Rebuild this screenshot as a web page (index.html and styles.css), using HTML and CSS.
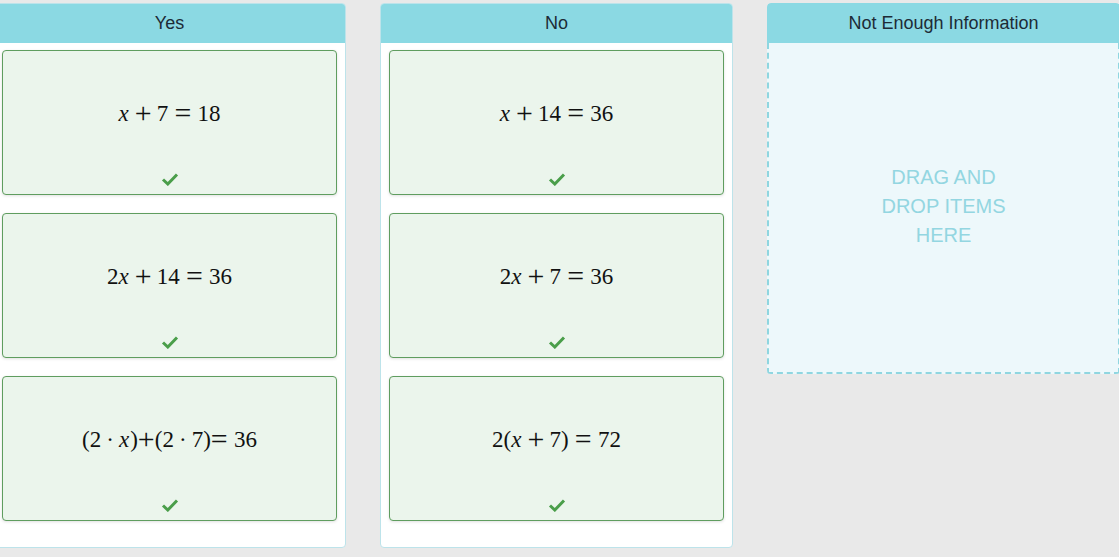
FILE: index.html
```html
<!DOCTYPE html>
<html lang="en">
<head>
    <meta charset="UTF-8">
    <meta name="viewport" content="width=device-width, initial-scale=1.0">
    <title>Sort the equations</title>
    <link rel="stylesheet" href="styles.css">
</head>
<body>
    <div class="board">
        <div class="bucket">
            <div class="bucket-title">Yes</div>
            <div class="bucket-items">
                <div class="tile">
                    <div class="expr"><i>x</i><span class="bin">+</span>7<span class="rel">=</span>18</div>
                    <svg class="check" viewBox="0 0 18 14"><path d="M2 7.5 L6.8 12 L16 2.5" /></svg>
                </div>
                <div class="tile">
                    <div class="expr">2<i>x</i><span class="bin">+</span>14<span class="rel">=</span>36</div>
                    <svg class="check" viewBox="0 0 18 14"><path d="M2 7.5 L6.8 12 L16 2.5" /></svg>
                </div>
                <div class="tile">
                    <div class="expr">(2<span class="dot">·</span><i>x</i>)<span class="bin tight">+</span>(2<span class="dot">·</span>7)<span class="rel rel-right">=</span>36</div>
                    <svg class="check" viewBox="0 0 18 14"><path d="M2 7.5 L6.8 12 L16 2.5" /></svg>
                </div>
            </div>
        </div>

        <div class="bucket">
            <div class="bucket-title">No</div>
            <div class="bucket-items">
                <div class="tile">
                    <div class="expr"><i>x</i><span class="bin">+</span>14<span class="rel">=</span>36</div>
                    <svg class="check" viewBox="0 0 18 14"><path d="M2 7.5 L6.8 12 L16 2.5" /></svg>
                </div>
                <div class="tile">
                    <div class="expr">2<i>x</i><span class="bin">+</span>7<span class="rel">=</span>36</div>
                    <svg class="check" viewBox="0 0 18 14"><path d="M2 7.5 L6.8 12 L16 2.5" /></svg>
                </div>
                <div class="tile">
                    <div class="expr">2(<i>x</i><span class="bin">+</span>7)<span class="rel">=</span>72</div>
                    <svg class="check" viewBox="0 0 18 14"><path d="M2 7.5 L6.8 12 L16 2.5" /></svg>
                </div>
            </div>
        </div>

        <div class="bucket bucket-empty">
            <div class="bucket-title">Not Enough Information</div>
            <div class="drop-zone">DRAG AND<br>DROP ITEMS<br>HERE</div>
        </div>
    </div>
</body>
</html>
```

FILE: styles.css
```css
body {
    font-family: 'Liberation Sans', Arial, sans-serif;
    background-color: #e9e9e9;
    margin: 0;
    padding: 0;
    overflow: hidden;
}

.board {
    display: flex;
    align-items: flex-start;
    gap: 34px;
    margin: 3px 0 0 -7px;
}

.bucket {
    flex: 0 0 353px;
    width: 353px;
    background: #ffffff;
    border: 1px solid #bde3ea;
    border-radius: 4px;
    box-sizing: border-box;
    overflow: hidden;
}

.bucket-empty {
    background: transparent;
    border: none;
}

.bucket-title {
    height: 39px;
    line-height: 39px;
    background-color: #8bd9e3;
    color: #1d2b36;
    text-align: center;
    font-size: 18px;
}

.bucket-empty .bucket-title {
    height: 40px;
    line-height: 40px;
    border-radius: 4px 4px 0 0;
}

.bucket-items {
    display: flex;
    flex-direction: column;
    gap: 18px;
    padding: 7px 8px 26px 8px;
}

.tile {
    height: 145px;
    box-sizing: border-box;
    background-color: #ebf5ec;
    border: 1px solid #5f9d5f;
    border-radius: 4px;
    box-shadow: 0 1px 3px rgba(0, 0, 0, 0.12);
    display: flex;
    flex-direction: column;
    align-items: center;
}

/* math, spaced like the typeset original */
.expr {
    margin-top: 47px;
    height: 26px;
    line-height: 26px;
    font-family: 'Liberation Serif', 'Times New Roman', serif;
    font-size: 23px;
    color: #111111;
    white-space: nowrap;
}

.expr i {
    font-style: italic;
    padding-right: 1px;
}

.bin,
.rel {
    display: inline-block;
    font-size: 1.3em;
    line-height: 1;
    vertical-align: -0.06em;
}

.bin {
    margin: 0 0.17em;
}

.rel {
    margin: 0 0.21em;
}

.tight {
    margin: 0;
}

.rel-right {
    margin-left: 0;
}

.dot {
    margin: 0 0.22em;
}

.check {
    width: 18px;
    height: 14px;
    margin-top: auto;
    margin-bottom: 8px;
}

.check path {
    fill: none;
    stroke: #4a9e4a;
    stroke-width: 3;
}

.drop-zone {
    height: 331px;
    box-sizing: border-box;
    background-color: #edf8fb;
    border: 2px dashed #8fd6e0;
    border-top: none;
    display: flex;
    align-items: center;
    justify-content: center;
    text-align: center;
    color: #93d6e1;
    font-size: 20px;
    line-height: 29px;
    padding-bottom: 2px;
}
```
